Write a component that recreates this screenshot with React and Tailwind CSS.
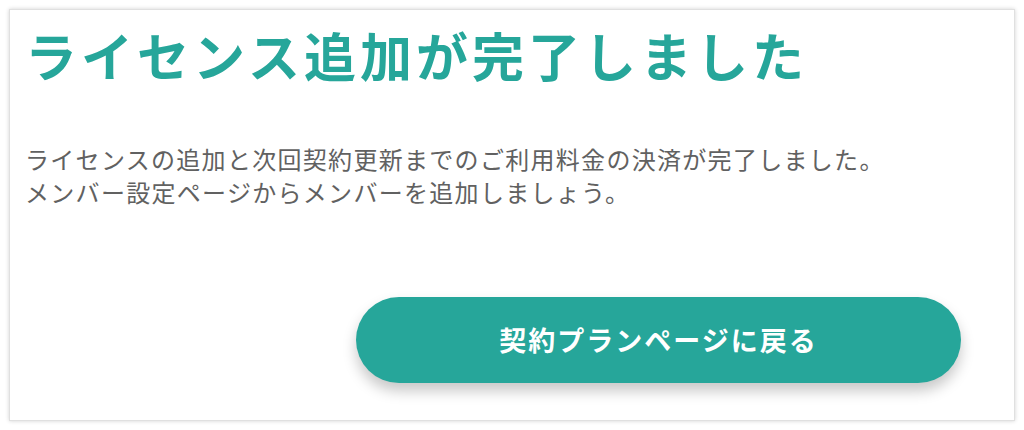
export default function App() {
  return (
    <div className="w-[1024px] h-[430px] bg-white p-[9px]" style={{ fontFamily: '"Noto Sans CJK JP", "Noto Sans", sans-serif' }}>
      <div className="w-[1006px] h-[412px] bg-white border border-[#e0e0e0] shadow-[0_0_4px_rgba(0,0,0,0.18)] flex flex-col pl-[15px]">
        <h1 className="text-[52px] font-bold text-[#26a69a] leading-[64px] mt-[13px] tracking-[4px]">ライセンス追加が完了しました</h1>
        <p className="mt-[55px] text-[24px] leading-[33px] text-[#616161] tracking-[1.3px]">
          ライセンスの追加と次回契約更新までのご利用料金の決済が完了しました。<br />
          メンバー設定ページからメンバーを追加しましょう。
        </p>
        <div className="flex justify-end pr-[53px] mt-[89px]">
          <button className="w-[605px] h-[86px] rounded-full bg-[#26a69a] text-white text-[27px] font-bold tracking-[2px] shadow-[0_8px_14px_rgba(0,0,0,0.22)]">
            契約プランページに戻る
          </button>
        </div>
      </div>
    </div>
  );
}
